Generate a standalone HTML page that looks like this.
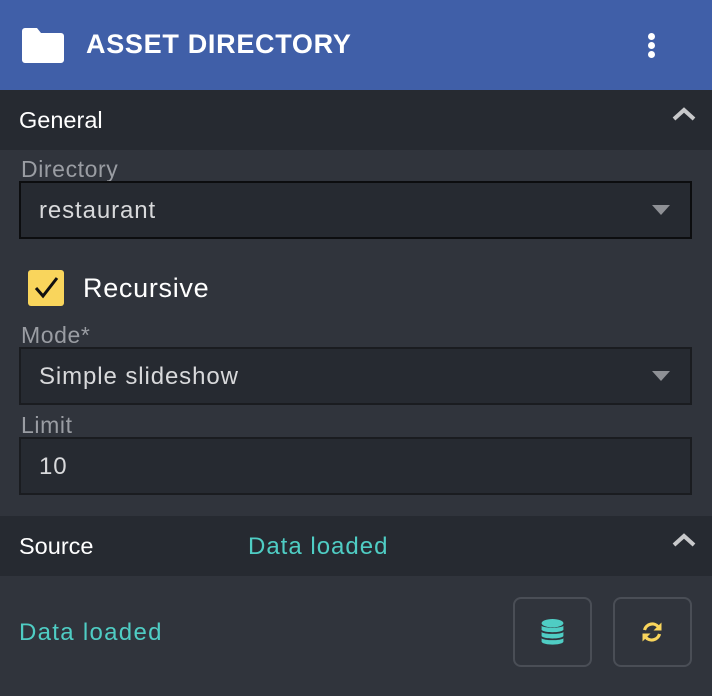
<!DOCTYPE html>
<html><head><style>
*{margin:0;padding:0;box-sizing:border-box}
body{width:712px;height:696px;background:#30343c;font-family:"Liberation Sans",sans-serif;position:relative;overflow:hidden}
.a{position:absolute}
.hdr{left:0;top:0;width:712px;height:90px;background:#405fa8}
.bar{left:0;width:712px;height:60px;background:#262a31}
.lbl{color:#9a9da3;font-size:23px;letter-spacing:0.6px;left:21px}
.inp{left:19px;width:673px;height:58px;background:#262a31;border:2px solid #1a1c20;color:#d8d9db;font-size:24px;letter-spacing:0.9px;padding-left:18px;line-height:56px}
.tri{right:20px;top:22px;width:0;height:0;border-left:9px solid transparent;border-right:9px solid transparent;border-top:10px solid #8e9095}
.btn{top:597px;width:79px;height:70px;border:2px solid #4a4e56;border-radius:8px}
</style></head><body>
<div class="a hdr"></div>
<svg class="a" style="left:22px;top:28px" width="42" height="35" viewBox="0 0 42 35"><path d="M3 0h12l4 5h20a3 3 0 0 1 3 3v24a3 3 0 0 1-3 3H3a3 3 0 0 1-3-3V3a3 3 0 0 1 3-3z" fill="#fff"/></svg>
<div class="a" style="left:86px;top:29px;color:#fff;font-weight:bold;font-size:27px;letter-spacing:0.7px">ASSET DIRECTORY</div>
<div class="a" style="left:648px;top:33px;width:7px;height:7px;border-radius:50%;background:#fff"></div>
<div class="a" style="left:648px;top:42px;width:7px;height:7px;border-radius:50%;background:#fff"></div>
<div class="a" style="left:648px;top:51px;width:7px;height:7px;border-radius:50%;background:#fff"></div>
<div class="a bar" style="top:90px"></div>
<div class="a" style="left:19px;top:107px;color:#fff;font-size:23.5px">General</div>
<svg class="a" style="left:671px;top:106px" width="26" height="16"><path d="M3 13L13 4L23 13" stroke="#c8c9cb" stroke-width="4" fill="none"/></svg>
<div class="a lbl" style="top:156px">Directory</div>
<div class="a inp" style="top:181px;border-color:#0c0d0f">restaurant<div class="a tri"></div></div>
<div class="a" style="left:28px;top:270px;width:36px;height:36px;background:#f9d55c;border-radius:3px"></div>
<svg class="a" style="left:28px;top:270px" width="36" height="36"><path d="M8 18l7 8L29 8" stroke="#111" stroke-width="3" fill="none"/></svg>
<div class="a" style="left:83px;top:273px;color:#fff;font-size:27px;letter-spacing:0.7px">Recursive</div>
<div class="a lbl" style="top:322px">Mode*</div>
<div class="a inp" style="top:347px">Simple slideshow<div class="a tri"></div></div>
<div class="a lbl" style="top:412px">Limit</div>
<div class="a inp" style="top:437px">10</div>
<div class="a bar" style="top:516px"></div>
<div class="a" style="left:19px;top:533px;color:#fff;font-size:23.5px">Source</div>
<div class="a" style="left:248px;top:533px;color:#4fcdc4;font-size:24px;letter-spacing:1px">Data loaded</div>
<svg class="a" style="left:671px;top:532px" width="26" height="16"><path d="M3 13L13 4L23 13" stroke="#c8c9cb" stroke-width="4" fill="none"/></svg>
<div class="a" style="left:19px;top:619px;color:#4fcdc4;font-size:24px;letter-spacing:1.3px">Data loaded</div>
<div class="a btn" style="left:513px"></div>
<div class="a btn" style="left:613px"></div>
<svg class="a" style="left:541px;top:619px" width="23" height="27" viewBox="0 0 22 26"><g fill="#4fcdc4"><ellipse cx="11" cy="4" rx="10.5" ry="4"/><path d="M0.5 6.5c2 2.5 19 2.5 21 0v4c-2 3-19 3-21 0z"/><path d="M0.5 12.5c2 2.5 19 2.5 21 0v4c-2 3-19 3-21 0z"/><path d="M0.5 18.5c2 2.5 19 2.5 21 0v3.5c-2 3.5-19 3.5-21 0z"/></g></svg>
<svg class="a" style="left:641px;top:621px" width="22" height="22" viewBox="0 0 22 22"><g fill="none" stroke="#f9d55c" stroke-width="3.2"><path d="M3.5 9A8 8 0 0 1 17.5 6"/><path d="M18.5 13A8 8 0 0 1 4.5 16"/></g><path d="M20.5 1.5v8h-8z" fill="#f9d55c"/><path d="M1.5 20.5v-8h8z" fill="#f9d55c"/></svg>
</body></html>
